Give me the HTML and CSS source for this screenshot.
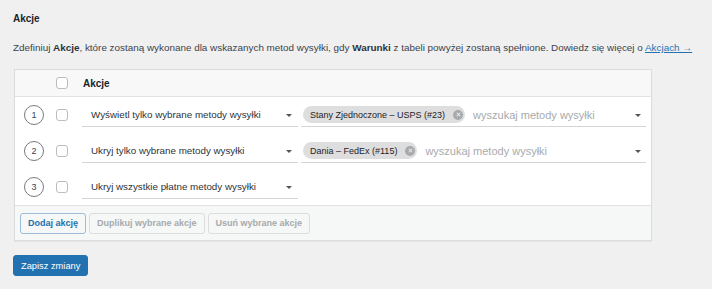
FILE: index.html
```html
<!DOCTYPE html>
<html lang="pl">
<head>
<meta charset="utf-8">
<link rel="stylesheet" href="styles.css">
</head>
<body>
<div class="page">
  <h2 class="title">Akcje</h2>
  <p class="desc">Zdefiniuj <strong>Akcje</strong>, które zostaną wykonane dla wskazanych metod wysyłki, gdy <strong>Warunki</strong> z tabeli powyżej zostaną spełnione. Dowiedz się więcej o <a href="#" class="link">Akcjach →</a></p>

  <div class="box">
    <div class="row head">
      <span class="cb"></span>
      <span class="head-label">Akcje</span>
    </div>
    <div class="body">
      <div class="row">
        <span class="num">1</span>
        <span class="cb"></span>
        <div class="select"><span>Wyświetl tylko wybrane metody wysyłki</span><i class="arrow"></i></div>
        <div class="multi">
          <span class="chip">Stany Zjednoczone – USPS (#23)<i class="x"></i></span>
          <span class="ph">wyszukaj metody wysyłki</span>
          <i class="arrow"></i>
        </div>
      </div>
      <div class="row">
        <span class="num">2</span>
        <span class="cb"></span>
        <div class="select"><span>Ukryj tylko wybrane metody wysyłki</span><i class="arrow"></i></div>
        <div class="multi">
          <span class="chip">Dania – FedEx (#115)<i class="x"></i></span>
          <span class="ph">wyszukaj metody wysyłki</span>
          <i class="arrow"></i>
        </div>
      </div>
      <div class="row">
        <span class="num">3</span>
        <span class="cb"></span>
        <div class="select"><span>Ukryj wszystkie płatne metody wysyłki</span><i class="arrow"></i></div>
      </div>
    </div>
    <div class="foot">
      <button class="btn outline">Dodaj akcję</button>
      <button class="btn disabled">Duplikuj wybrane akcje</button>
      <button class="btn disabled">Usuń wybrane akcje</button>
    </div>
  </div>

  <button class="save">Zapisz zmiany</button>
</div>
</body>
</html>
```

FILE: styles.css
```css
* { box-sizing: border-box; }
body {
  margin: 0;
  background: #f0f0f1;
  font-family: "Liberation Sans", Arial, sans-serif;
  color: #1d2327;
}
.page { padding: 13px 13px 0 13px; }
.title {
  margin: 0;
  font-size: 10px;
  line-height: 12px;
  font-weight: 700;
  color: #1d2327;
}
.desc {
  margin: 16px 0 0 0;
  font-size: 9.9px;
  line-height: 14px;
  color: #3c434a;
  white-space: nowrap;
}
.desc strong { color: #2c3338; }
.link { color: #2271b1; text-decoration: underline; }
.box {
  margin: 14px 0 0 1px;
  width: 638px;
  border: 1px solid #dcdcde;
  background: #fff;
  box-shadow: 0 1px 1px rgba(0,0,0,.04);
}
.row {
  display: flex;
  align-items: center;
  height: 36px;
  padding-left: 9px;
}
.head {
  height: 27px;
  background: #f8f8f8;
  border-bottom: 1px solid #e2e2e4;
  padding-left: 41px;
}
.head-label {
  font-size: 10px;
  font-weight: 700;
  color: #1d2327;
  margin-left: 15px;
}
.cb {
  flex: none;
  width: 12px;
  height: 12px;
  border: 1px solid #bdbdbd;
  border-radius: 3px;
  background: #fff;
  display: block;
}
.num {
  flex: none;
  width: 20px;
  height: 20px;
  border: 1px solid #7a7a7a;
  border-radius: 50%;
  display: flex;
  align-items: center;
  justify-content: center;
  font-size: 9px;
  color: #3c434a;
  margin-right: 12px;
}
.select {
  flex: none;
  width: 216px;
  height: 23px;
  margin: 0 3px 0 14px;
  border-bottom: 1px solid #d4d4d4;
  display: flex;
  align-items: center;
  justify-content: space-between;
  padding: 0 6px 0 9px;
  font-size: 9.8px;
  color: #2c3338;
}
.arrow {
  flex: none;
  width: 0;
  height: 0;
  border-left: 3.5px solid transparent;
  border-right: 3.5px solid transparent;
  border-top: 3.5px solid #50575e;
  margin-top: 1px;
}
.multi {
  flex: none;
  width: 345px;
  height: 23px;
  border-bottom: 1px solid #d4d4d4;
  display: flex;
  align-items: center;
  padding: 0 5px 0 2px;
}
.chip {
  display: flex;
  align-items: center;
  height: 17px;
  border-radius: 9px;
  background: #dedede;
  padding: 0 2px 0 7px;
  font-size: 9px;
  color: #1d2327;
}
.x {
  width: 10px;
  height: 10px;
  border-radius: 50%;
  background: #a7aaad;
  margin-left: 8px;
  position: relative;
}
.x::before, .x::after {
  content: "";
  position: absolute;
  left: 2.5px;
  top: 4.5px;
  width: 5px;
  height: 1px;
  background: #eee;
  transform: rotate(45deg);
}
.x::after { transform: rotate(-45deg); }
.ph {
  margin-left: 8px;
  font-size: 11px;
  color: #a7aaad;
  flex: 1;
}
.foot {
  background: #f6f7f7;
  border-top: 1px solid #e2e2e4;
  height: 35px;
  display: flex;
  align-items: center;
  gap: 3px;
  padding-left: 5px;
}
.btn {
  height: 21px;
  padding: 0 7px;
  font-family: inherit;
  font-size: 9px;
  font-weight: 700;
  border-radius: 3px;
  border: 1px solid #dcdcde;
  background: #f6f7f7;
}
.outline {
  color: #2271b1;
  border-color: #9ebbd6;
  background: #f6f7f7;
}
.disabled { color: #a7aaad; }
.save {
  margin-top: 14px;
  height: 21px;
  padding: 0 7px;
  background: #2271b1;
  color: #fff;
  border: 1px solid #2271b1;
  border-radius: 3px;
  font-family: inherit;
  font-size: 9.3px;
}
```
